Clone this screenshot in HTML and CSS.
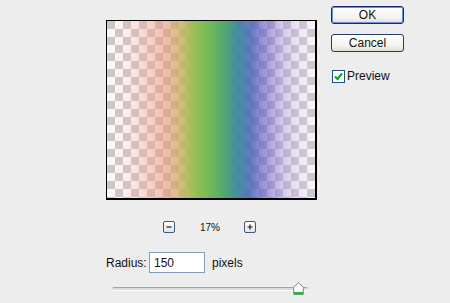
FILE: index.html
```html
<!DOCTYPE html>
<html>
<head>
<meta charset="utf-8">
<link rel="stylesheet" href="styles.css">
</head>
<body>
<div class="dialog">
  <div class="left">
    <div class="preview"><div class="tint"></div></div>
    <div class="zoom-row">
      <span class="zbtn"><svg width="8" height="8" viewBox="0 0 8 8"><path d="M1.5 4h5" stroke="#1c1c1c" stroke-width="1.2"/></svg></span>
      <span class="zval">17%</span>
      <span class="zbtn"><svg width="8" height="8" viewBox="0 0 8 8"><path d="M1.5 4h5M4 1.5v5" stroke="#1c1c1c" stroke-width="1.2"/></svg></span>
    </div>
    <div class="radius-row">
      <span class="label">Radius:</span>
      <span class="input">150</span>
      <span class="unit">pixels</span>
    </div>
    <div class="slider">
      <div class="track"></div>
      <svg class="thumb" width="11" height="13" viewBox="0 0 11 13">
        <path d="M5.5 0.7 L10.3 5.2 V12.3 H0.7 V5.2 Z" fill="#fbfbfb" stroke="#7a8a7a" stroke-width="1"/>
        <rect x="1" y="10" width="9" height="2.5" fill="#2fb040"/>
      </svg>
    </div>
  </div>
  <div class="right">
    <div class="btn default">OK</div>
    <div class="btn">Cancel</div>
    <label class="check">
      <span class="box"><svg width="11" height="11" viewBox="0 0 11 11"><path d="M2 5.5 L4.5 8 L9 2.5" fill="none" stroke="#22a022" stroke-width="2.2"/></svg></span>
      <span>Preview</span>
    </label>
  </div>
</div>
</body>
</html>
```

FILE: styles.css
```css
html, body {
  margin: 0;
  padding: 0;
  background: #ededed;
  font-family: "Liberation Sans", Arial, sans-serif;
  font-size: 12px;
  color: #111;
}
.dialog {
  display: flex;
  padding: 6px 0 0 106px;
  height: 297px;
}
.left {
  width: 210px;
  display: flex;
  flex-direction: column;
}
.preview {
  margin-top: 14px;
  width: 208px;
  height: 177px;
  border: 1px solid #000;
  border-width: 1px 2px 2px 1px;
  position: relative;
  background: repeating-conic-gradient(#fbfafa 0 25%, #cbc7c8 0 50%) 0 0 / 16px 16px;
  overflow: hidden;
}
.tint {
  position: absolute;
  inset: 0;
  background: linear-gradient(to right,
    rgba(255, 210, 210, 0) 0%,
    rgba(250, 180, 170, 0.2) 10%,
    rgba(245, 165, 150, 0.45) 20%,
    rgba(235, 150, 120, 0.6) 28%,
    rgba(205, 175, 95, 0.8) 35%,
    rgba(150, 190, 80, 0.97) 42%,
    rgba(110, 185, 90, 1) 50%,
    rgba(80, 165, 120, 1) 57%,
    rgba(60, 135, 160, 0.95) 63%,
    rgba(75, 100, 185, 0.85) 69%,
    rgba(110, 100, 200, 0.65) 76%,
    rgba(160, 140, 215, 0.45) 84%,
    rgba(205, 185, 235, 0.3) 92%,
    rgba(225, 210, 245, 0.15) 100%);
}
.zoom-row {
  margin-top: 21px;
  display: flex;
  align-items: center;
  padding-left: 57px;
  height: 12px;
}
.zbtn {
  width: 10px;
  height: 10px;
  border: 1px solid #3b5a7a;
  border-radius: 2px;
  background: linear-gradient(#ffffff, #e4e4e4);
  display: flex;
  align-items: center;
  justify-content: center;
}
.zval {
  font-size: 10px;
  width: 19px;
  margin: 0 25px 0 25px;
  text-align: center;
}
.radius-row {
  margin-top: 19px;
  display: flex;
  align-items: center;
  height: 21px;
}
.label {
  width: 43px;
}
.input {
  box-sizing: border-box;
  width: 56px;
  height: 21px;
  border: 1px solid #7f9db9;
  background: #fff;
  padding: 2px 0 0 4px;
  line-height: 16px;
}
.unit {
  margin-left: 7px;
}
.slider {
  position: relative;
  margin-top: 9px;
  margin-left: 6px;
  width: 196px;
  height: 13px;
}
.track {
  margin-top: 5px;
  height: 2px;
  border-radius: 2px;
  border-top: 1px solid #a3a3a3;
  border-bottom: 1px solid #fff;
  background: #dcdcdc;
}
.thumb {
  position: absolute;
  left: 181px;
  top: 0;
}
.right {
  margin-left: 15px;
  display: flex;
  flex-direction: column;
}
.btn {
  box-sizing: border-box;
  width: 73px;
  height: 18px;
  border: 1px solid #1f3d6a;
  border-radius: 3px;
  background: linear-gradient(#ffffff, #f2f2ee 70%, #dedcd2);
  text-align: center;
  line-height: 16px;
  font-size: 12px;
}
.btn.default {
  box-shadow: inset 0 0 0 1px #6d8fce;
  border-color: #0e2f6a;
}
.btn + .btn {
  margin-top: 10px;
}
.check {
  margin-top: 17px;
  margin-left: 1px;
  display: flex;
  align-items: center;
  gap: 2px;
}
.box {
  box-sizing: border-box;
  width: 13px;
  height: 13px;
  border: 1px solid #1c5180;
  background: #fff;
  display: flex;
  align-items: center;
  justify-content: center;
}
```
